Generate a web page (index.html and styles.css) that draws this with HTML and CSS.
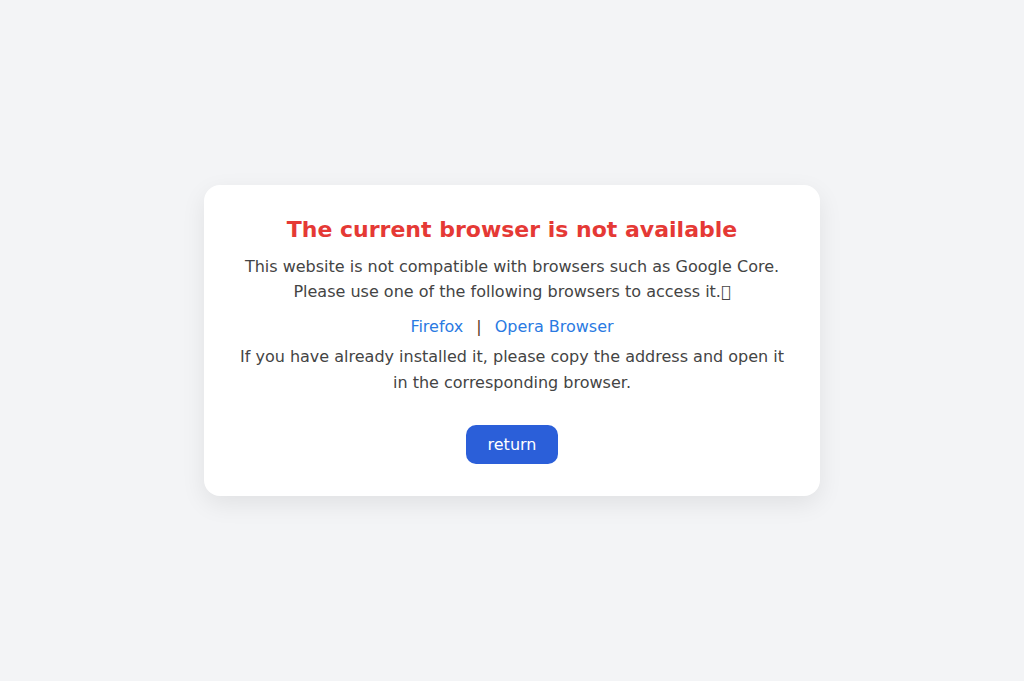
FILE: index.html
```html
<!DOCTYPE html>
<html lang="en">

<head>
    <meta charset="UTF-8">
    <meta name="viewport" content="width=device-width, initial-scale=1.0">
    <title>Browser not supported</title>
    <link rel="stylesheet" href="styles.css">
</head>

<body>
    <!-- 提示卡片 -->
    <div class="notice">
        <h1 class="notice-title">The current browser is not available</h1>
        <p class="notice-text">This website is not compatible with browsers such as Google Core.<br>Please use one of the following browsers to access it.&#xE000;</p>
        <div class="notice-links">
            <a href="#">Firefox</a>
            <span class="sep">|</span>
            <a href="#">Opera Browser</a>
        </div>
        <p class="notice-text notice-tip">If you have already installed it, please copy the address and open it in the corresponding browser.</p>
        <button class="btn-return">return</button>
    </div>
</body>

</html>
```

FILE: styles.css
```css
* {
    margin: 0;
    padding: 0;
    box-sizing: border-box;
}

html,
body {
    height: 100%;
}

body {
    background: #f3f4f6;
    font-family: "DejaVu Sans", sans-serif;
    display: flex;
    align-items: center;
    justify-content: center;
}

.notice {
    width: 616px;
    background: #fff;
    border-radius: 16px;
    box-shadow: 0 8px 24px rgba(0, 0, 0, 0.08);
    padding: 30px 32px 32px;
    text-align: center;
    display: flex;
    flex-direction: column;
    align-items: center;
}

.notice-title {
    font-size: 22px;
    line-height: 29px;
    font-weight: bold;
    color: #e53935;
}

.notice-text {
    margin-top: 10px;
    font-size: 16px;
    line-height: 25px;
    color: #444;
}

.notice-links {
    margin-top: 10px;
    font-size: 16px;
    line-height: 25px;
    display: flex;
    gap: 13px;
}

.notice-links a {
    color: #2a7ae2;
    text-decoration: none;
}

.notice-links .sep {
    color: #5a3a22;
}

.notice-tip {
    margin-top: 5px;
    line-height: 26px;
}

.btn-return {
    margin-top: 29px;
    width: 92px;
    height: 39px;
    border: none;
    border-radius: 10px;
    background: #2b5fd9;
    color: #fff;
    font-family: "DejaVu Sans", sans-serif;
    font-size: 16px;
    cursor: pointer;
}
```
